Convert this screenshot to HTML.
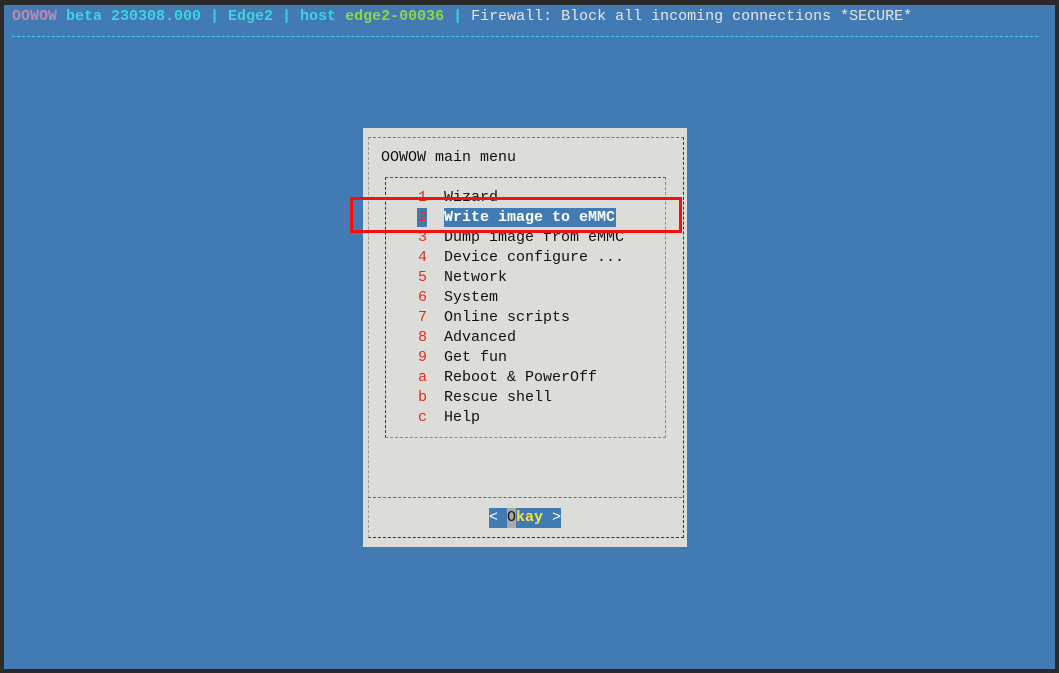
<!DOCTYPE html>
<html><head><meta charset="utf-8"><style>
body{margin:0;width:1059px;height:673px;background:#2a2a2a;position:relative;overflow:hidden;font-family:"Liberation Mono",monospace;font-size:15px}
.scr{position:absolute;left:4px;top:5px;width:1051px;height:664px;background:#427ab4}
.t{position:absolute;white-space:pre;line-height:20px}
.dlg{position:absolute;left:363px;top:128px;width:324px;height:419px;background:#dcddd8}
.b{position:absolute;border:1px dashed #6b6b6b}
</style></head><body>
<div class="scr"></div>
<div class="t" style="left:12px;top:7px;font-weight:bold;color:#3ed3e0"><span style="color:#c487b0">OOWOW</span> beta 230308.000 | Edge2 | host <span style="color:#8fd54a">edge2-00036</span> | <span style="font-weight:normal;color:#e6e6e6">Firewall: Block all incoming connections *SECURE*</span></div>
<div style="position:absolute;left:12px;top:36px;width:1026px;border-top:1px dashed #3ed3e0"></div>
<div class="dlg"></div>
<div class="b" style="left:368px;top:137px;width:314px;height:399px;border-color:#777 #333 #333 #999"></div>
<div class="b" style="left:368px;top:497px;width:314px;height:0;border-width:1px 0 0 0"></div>
<div class="t" style="left:381px;top:148px;color:#111">OOWOW main menu</div>
<div class="b" style="left:385px;top:177px;width:279px;height:259px;border-color:#555 #888 #888 #333"></div>
<div style="position:absolute;left:417px;top:208px;width:10px;height:19px;background:#427ab4"></div>
<div style="position:absolute;left:444px;top:208px;width:172px;height:19px;background:#427ab4"></div>
<div class="t" style="left:418px;top:188px;color:#d83020">1
2
3
4
5
6
7
8
9
a
b
c</div>
<div class="t" style="left:444px;top:188px;color:#111">Wizard
<span style="color:#fff;font-weight:bold">Write image to eMMC</span>
Dump image from eMMC
Device configure ...
Network
System
Online scripts
Advanced
Get fun
Reboot &amp; PowerOff
Rescue shell
Help</div>
<div style="position:absolute;left:489px;top:508px;width:72px;height:20px;background:#427ab4"></div>
<div style="position:absolute;left:507px;top:508px;width:9px;height:20px;background:#a9a9a9"></div>
<div class="t" style="left:489px;top:508px;color:#fff">&lt; <span style="color:#111">O</span><span style="color:#f2e24a;font-weight:bold">kay</span> &gt;</div>
<div style="position:absolute;left:350px;top:197px;width:326px;height:30px;border:3px solid #f21010"></div>
</body></html>
